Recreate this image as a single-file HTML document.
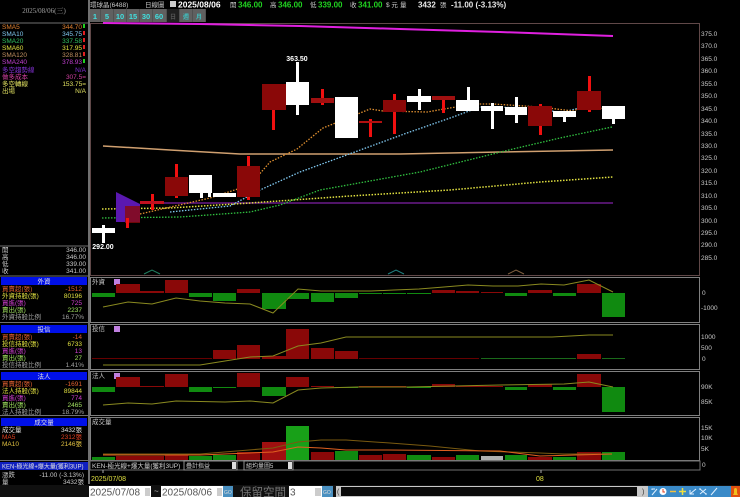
<!DOCTYPE html>
<html><head><meta charset="utf-8"><style>
html,body{margin:0;padding:0;background:#000;width:740px;height:497px;overflow:hidden}
svg{display:block}
text{font-family:"Liberation Sans","Noto Sans CJK TC",sans-serif}
.s{font-size:6.5px}
.m{font-family:"Liberation Serif","Noto Serif CJK SC",serif;font-size:7px}
</style></head><body>
<svg width="740" height="497" viewBox="0 0 740 497" xmlns="http://www.w3.org/2000/svg">
<rect width="740" height="497" fill="#000"/>
<!-- top -->
<text x="90" y="7" class="s" fill="#c8c8c8">環球晶(6488)</text>
<text x="145" y="7" class="s" fill="#c8c8c8">日線圖</text>
<rect x="170" y="1" width="6" height="6" fill="#ccc"/>
<text x="178" y="7.5" font-size="8.5" font-weight="bold" fill="#fff">2025/08/06</text>
<text x="230" y="7" class="s" fill="#c8c8c8">開</text><text x="238" y="7.5" font-size="8" font-weight="bold" fill="#20d020">346.00</text>
<text x="270" y="7" class="s" fill="#c8c8c8">高</text><text x="278" y="7.5" font-size="8" font-weight="bold" fill="#20d020">346.00</text>
<text x="310" y="7" class="s" fill="#c8c8c8">低</text><text x="318" y="7.5" font-size="8" font-weight="bold" fill="#20d020">339.00</text>
<text x="350" y="7" class="s" fill="#c8c8c8">收</text><text x="358" y="7.5" font-size="8" font-weight="bold" fill="#20d020">341.00</text>
<text x="386" y="7" class="s" fill="#c8c8c8">$ 元</text><text x="400" y="7" class="s" fill="#c8c8c8">量</text>
<text x="418" y="7.5" font-size="8" font-weight="bold" fill="#e8e8e8">3432</text><text x="440" y="7" class="s" fill="#c8c8c8">張</text>
<text x="451" y="7.5" font-size="8" font-weight="bold" fill="#e8e8e8">-11.00 (-3.13%)</text>
<!-- buttons -->
<g font-size="7.5" font-weight="bold" fill="#40e0e0" text-anchor="middle">
<rect x="90" y="9" width="116" height="13" fill="#505050"/>
<rect x="90" y="9" width="10" height="13" fill="#606060"/><text x="95" y="19">1</text>
<rect x="101" y="9" width="12" height="13" fill="#606060"/><text x="107" y="19">5</text>
<rect x="114" y="9" width="12" height="13" fill="#606060"/><text x="120" y="19">10</text>
<rect x="127" y="9" width="12" height="13" fill="#606060"/><text x="133" y="19">15</text>
<rect x="140" y="9" width="12" height="13" fill="#606060"/><text x="146" y="19">30</text>
<rect x="153" y="9" width="13" height="13" fill="#606060"/><text x="159" y="19">60</text>
<rect x="167" y="9" width="12" height="13" fill="#202020"/><text x="173" y="19" font-size="6" fill="#555">日</text>
<rect x="180" y="9" width="12" height="13" fill="#606060"/><text x="186" y="19" font-size="6" fill="#40c0c0">週</text>
<rect x="193" y="9" width="12" height="13" fill="#606060"/><text x="199" y="19" font-size="6" fill="#40c0c0">月</text>
</g>
<!-- left panel -->
<rect x="88" y="0" width="2" height="484" fill="#707070"/>
<text x="44" y="13" class="m" fill="#a0a0a0" text-anchor="middle">2025/08/06(三)</text>
<line x1="0" y1="23" x2="88" y2="23" stroke="#707070"/>
<g class="s">
<text x="2" y="29" fill="#e08030">SMA5</text><text x="82" y="29" fill="#e08030" text-anchor="end">344.70</text><rect x="83" y="24" width="2" height="4" fill="#20d020"/>
<text x="2" y="36" fill="#80c8f0">SMA10</text><text x="82" y="36" fill="#80c8f0" text-anchor="end">345.75</text><rect x="83" y="31" width="2" height="4" fill="#e02020"/>
<text x="2" y="43" fill="#30c060">SMA20</text><text x="82" y="43" fill="#30c060" text-anchor="end">337.58</text><rect x="83" y="38" width="2" height="4" fill="#e02020"/>
<text x="2" y="50" fill="#e0e040">SMA60</text><text x="82" y="50" fill="#e0e040" text-anchor="end">317.95</text><rect x="83" y="45" width="2" height="4" fill="#e02020"/>
<text x="2" y="57" fill="#c09060">SMA120</text><text x="82" y="57" fill="#c09060" text-anchor="end">328.81</text><rect x="83" y="52" width="2" height="4" fill="#e02020"/>
<text x="2" y="64" fill="#c040d0">SMA240</text><text x="82" y="64" fill="#c040d0" text-anchor="end">378.93</text><rect x="83" y="59" width="2" height="4" fill="#20d020"/>
<text x="2" y="72" fill="#8030d0">多空趨勢線</text><text x="86" y="72" fill="#8030d0" text-anchor="end">N/A</text>
<text x="2" y="79" fill="#d040a0">做多成本</text><text x="86" y="79" fill="#d040a0" text-anchor="end">307.5=</text>
<text x="2" y="86" fill="#e0e060">多空轉線</text><text x="86" y="86" fill="#e0e060" text-anchor="end">153.75=</text>
<text x="2" y="93" fill="#e0e060">出場</text><text x="86" y="93" fill="#e0e060" text-anchor="end">N/A</text>
</g>
<line x1="0" y1="246" x2="88" y2="246" stroke="#707070"/>
<g class="s" fill="#c8c8c8">
<text x="2" y="252">開</text><text x="86" y="252" text-anchor="end">346.00</text>
<text x="2" y="259">高</text><text x="86" y="259" text-anchor="end">346.00</text>
<text x="2" y="266">低</text><text x="86" y="266" text-anchor="end">339.00</text>
<text x="2" y="273">收</text><text x="86" y="273" text-anchor="end">341.00</text>
</g>
<line x1="0" y1="276" x2="88" y2="276" stroke="#707070"/>
<!-- sections -->
<g class="s">
<rect x="1" y="277" width="86" height="8" fill="#0010e8"/><text x="44" y="283.5" fill="#e0e0e0" text-anchor="middle">外資</text>
<text x="2" y="291" fill="#e06030">買賣超(張)</text><text x="82" y="291" fill="#e06030" text-anchor="end">-1512</text>
<text x="2" y="298" fill="#e0e040">外資持股(張)</text><text x="82" y="298" fill="#e0e040" text-anchor="end">80196</text>
<text x="2" y="305" fill="#d040d0">買進(張)</text><text x="82" y="305" fill="#d040d0" text-anchor="end">725</text>
<text x="2" y="312" fill="#a0e060">賣出(張)</text><text x="82" y="312" fill="#a0e060" text-anchor="end">2237</text>
<text x="2" y="319" fill="#a0a0a0">外資持股比例</text><text x="84" y="319" fill="#a0a0a0" text-anchor="end">16.77%</text>
<line x1="0" y1="322.5" x2="88" y2="322.5" stroke="#707070"/>
<rect x="1" y="325" width="86" height="8" fill="#0010e8"/><text x="44" y="331.5" fill="#e0e0e0" text-anchor="middle">投信</text>
<text x="2" y="339" fill="#e06030">買賣超(張)</text><text x="82" y="339" fill="#e06030" text-anchor="end">-14</text>
<text x="2" y="346" fill="#e0e040">投信持股(張)</text><text x="82" y="346" fill="#e0e040" text-anchor="end">6733</text>
<text x="2" y="353" fill="#d040d0">買進(張)</text><text x="82" y="353" fill="#d040d0" text-anchor="end">13</text>
<text x="2" y="360" fill="#a0e060">賣出(張)</text><text x="82" y="360" fill="#a0e060" text-anchor="end">27</text>
<text x="2" y="367" fill="#a0a0a0">投信持股比例</text><text x="84" y="367" fill="#a0a0a0" text-anchor="end">1.41%</text>
<line x1="0" y1="369.5" x2="88" y2="369.5" stroke="#707070"/>
<rect x="1" y="372" width="86" height="8" fill="#0010e8"/><text x="44" y="378.5" fill="#e0e0e0" text-anchor="middle">法人</text>
<text x="2" y="386" fill="#e06030">買賣超(張)</text><text x="82" y="386" fill="#e06030" text-anchor="end">-1691</text>
<text x="2" y="393" fill="#e0e040">法人持股(張)</text><text x="82" y="393" fill="#e0e040" text-anchor="end">89844</text>
<text x="2" y="400" fill="#d040d0">買進(張)</text><text x="82" y="400" fill="#d040d0" text-anchor="end">774</text>
<text x="2" y="407" fill="#a0e060">賣出(張)</text><text x="82" y="407" fill="#a0e060" text-anchor="end">2465</text>
<text x="2" y="414" fill="#a0a0a0">法人持股比例</text><text x="84" y="414" fill="#a0a0a0" text-anchor="end">18.79%</text>
<line x1="0" y1="415.5" x2="88" y2="415.5" stroke="#707070"/>
<rect x="1" y="418" width="86" height="8" fill="#0010e8"/><text x="44" y="424.5" fill="#e0e0e0" text-anchor="middle">成交量</text>
<text x="2" y="432" fill="#e0e0e0">成交量</text><text x="82" y="432" fill="#e0e0e0" text-anchor="end">3432張</text>
<text x="2" y="439" fill="#e04020">MA5</text><text x="82" y="439" fill="#e04020" text-anchor="end">2312張</text>
<text x="2" y="446" fill="#e0c040">MA10</text><text x="82" y="446" fill="#e0c040" text-anchor="end">2146張</text>
<line x1="0" y1="460.5" x2="88" y2="460.5" stroke="#707070"/>
<rect x="0" y="462" width="88" height="8" fill="#1020c0"/><text x="2" y="468.5" fill="#e0e0e0" font-size="6">KEN-極光線+爆大量(獲利3UP)</text>
<text x="2" y="477" fill="#c8c8c8">漲跌</text><text x="84" y="477" fill="#c8c8c8" text-anchor="end">-11.00 (-3.13%)</text>
<text x="2" y="484" fill="#c8c8c8">量</text><text x="84" y="484" fill="#c8c8c8" text-anchor="end">3432張</text>
</g>
<!-- main chart frame -->
<rect x="90.5" y="23.5" width="609" height="252" fill="none" stroke="#604848"/>
<polyline points="103,23 200,24 300,26 400,29 500,32 613,36" fill="none" stroke="#e020e0" stroke-width="2"/>
<g class="s" fill="#c8c8c8" font-size="7">
<text x="701" y="36">375.0</text><text x="701" y="48">370.0</text><text x="701" y="61">365.0</text><text x="701" y="73">360.0</text><text x="701" y="86">355.0</text><text x="701" y="98">350.0</text><text x="701" y="111">345.0</text><text x="701" y="123">340.0</text><text x="701" y="136">335.0</text><text x="701" y="148">330.0</text><text x="701" y="160">325.0</text><text x="701" y="173">320.0</text><text x="701" y="185">315.0</text><text x="701" y="198">310.0</text><text x="701" y="210">305.0</text><text x="701" y="223">300.0</text><text x="701" y="235">295.0</text><text x="701" y="247">290.0</text><text x="701" y="260">285.0</text>
</g>
<polyline points="103,146 170,150 240,154 400,154 500,152 613,150" fill="none" stroke="#d0a070" stroke-width="1.5"/>
<line x1="140" y1="203" x2="613" y2="203" stroke="#6a1a8a" stroke-width="1.5"/>
<polyline points="102,209 170,208 250,203 350,196 450,190 540,182 613,177" fill="none" stroke="#e0e040" stroke-width="1.5" stroke-dasharray="1.5,1.5"/>
<polyline points="102,218 180,217 250,212 280,205 320,190 420,172 513,149 560,138 612,127" fill="none" stroke="#30c040" stroke-width="1.3" stroke-dasharray="1.5,1.5"/>
<polyline points="170,212 230,206 260,190 300,172 363,149 407,133 453,117 480,107 540,108 560,113 583,107 612,107" fill="none" stroke="#80c8f0" stroke-width="1.3" stroke-dasharray="1.5,1.5"/>
<polyline points="140,214 210,198 250,185 270,162 297,149 323,128 370,109 383,111 427,112 473,104 493,104 540,107 573,111 583,107 612,109" fill="none" stroke="#e09030" stroke-width="1.3" stroke-dasharray="1.5,1.5"/>
<polygon points="116,192 140,204 140,222 116,222" fill="#5a18b0"/>
<rect x="125" y="206" width="15" height="17" fill="#8a0a0a" opacity=".8"/>
<!-- candles -->
<g fill="#fff">
<rect x="102" y="225" width="3" height="18"/><rect x="92" y="228" width="23" height="5"/>
<rect x="208" y="181" width="3" height="16"/><rect x="213" y="193" width="23" height="4"/>
<rect x="296" y="62" width="3" height="53"/><rect x="286" y="82" width="23" height="23"/>
<rect x="335" y="97" width="23" height="41"/>
<rect x="418" y="89" width="3" height="21"/><rect x="407" y="96" width="24" height="6"/>
<rect x="467" y="87" width="3" height="24"/><rect x="456" y="100" width="23" height="11"/>
<rect x="491" y="103" width="3" height="26"/><rect x="481" y="106" width="22" height="5"/>
<rect x="515" y="97" width="3" height="26"/><rect x="505" y="107" width="22" height="8"/>
<rect x="563" y="111" width="3" height="11"/><rect x="553" y="111" width="23" height="6"/>
<rect x="612" y="106" width="3" height="18"/><rect x="602" y="106" width="23" height="13"/>
<rect x="200" y="175" width="3" height="23"/><rect x="189" y="175" width="23" height="18"/>
</g>
<text x="297" y="61" font-size="7" font-weight="bold" fill="#fff" text-anchor="middle">363.50</text>
<text x="103" y="249" font-size="7" font-weight="bold" fill="#fff" text-anchor="middle">292.00</text>
<g fill="#f01010">
<rect x="126" y="218" width="3" height="10"/>
<rect x="151" y="194" width="3" height="16"/>
<rect x="175" y="164" width="3" height="34"/>
<rect x="247" y="156" width="3" height="44"/>
<rect x="272" y="110" width="3" height="20"/>
<rect x="321" y="89" width="3" height="16"/>
<rect x="369" y="119" width="3" height="18"/>
<rect x="393" y="94" width="3" height="40"/>
<rect x="442" y="96" width="3" height="17"/>
<rect x="539" y="104" width="3" height="31"/>
<rect x="588" y="76" width="3" height="36"/>
</g>
<g fill="#8a0808">
<rect x="140" y="201" width="24" height="3" fill="#c01020"/>
<rect x="165" y="177" width="23" height="19"/>
<rect x="237" y="166" width="23" height="31"/>
<rect x="262" y="84" width="24" height="26"/>
<rect x="311" y="98" width="23" height="5" fill="#a01010"/>
<rect x="359" y="121" width="23" height="2" fill="#b01010"/>
<rect x="383" y="100" width="23" height="12"/>
<rect x="432" y="96" width="23" height="4" fill="#a01010"/>
<rect x="528" y="106" width="24" height="20"/>
<rect x="577" y="91" width="24" height="19"/>
</g>
<polyline points="144,274 152,270 160,274" fill="none" stroke="#208060"/>
<polyline points="388,274 396,270 404,274" fill="none" stroke="#208080"/>
<polyline points="508,274 516,270 524,274" fill="none" stroke="#806040"/>
<!-- subpanels frames -->
<g fill="none" stroke="#808080">
<rect x="90.5" y="277.5" width="609" height="45"/>
<rect x="90.5" y="324.5" width="609" height="45"/>
<rect x="90.5" y="371.5" width="609" height="44"/>
<rect x="90.5" y="417.5" width="609" height="43"/>
</g>
<g class="s" fill="#c8c8c8" font-size="7">
<text x="702" y="295">0</text><text x="701" y="310">-1000</text>
<text x="701" y="339">1000</text><text x="701" y="350">500</text><text x="702" y="361">0</text>
<text x="701" y="389">90K</text><text x="701" y="404">85K</text>
<text x="701" y="430">15K</text><text x="701" y="440">10K</text><text x="701" y="451">5K</text><text x="702" y="467">0</text>
</g>
<g class="s" fill="#c8c8c8">
<text x="92" y="284">外資</text><text x="92" y="331">投信</text><text x="92" y="378">法人</text><text x="92" y="424">成交量</text>
</g>
<rect x="114" y="279" width="6" height="6" fill="#c080e0"/>
<rect x="114" y="326" width="6" height="6" fill="#c080e0"/>
<rect x="114" y="373" width="6" height="6" fill="#c080e0"/>
<!-- 外資 bars -->
<g fill="#108a10">
<rect x="92" y="293" width="23" height="4"/><rect x="189" y="293" width="23" height="4"/><rect x="213" y="293" width="23" height="8"/>
<rect x="262" y="293" width="24" height="16"/><rect x="286" y="293" width="23" height="6"/><rect x="311" y="293" width="23" height="9"/><rect x="335" y="293" width="23" height="5"/>
<rect x="359" y="293" width="23" height="1"/><rect x="383" y="293" width="23" height="1"/><rect x="407" y="293" width="24" height="1"/>
<rect x="505" y="293" width="22" height="3"/><rect x="553" y="293" width="23" height="3"/><rect x="602" y="293" width="23" height="24"/>
</g>
<g fill="#8a0808">
<rect x="116" y="284" width="24" height="9"/><rect x="140" y="291" width="24" height="2"/><rect x="165" y="280" width="23" height="13"/><rect x="237" y="289" width="23" height="4"/>
<rect x="432" y="290" width="23" height="3"/><rect x="456" y="291" width="23" height="2"/><rect x="481" y="292" width="22" height="1"/><rect x="528" y="290" width="24" height="3"/><rect x="577" y="284" width="24" height="9"/>
</g>
<polyline points="103,307 128,302 152,304 176,298 200,301 225,303 250,304 273,313 298,289 321,291 346,291 371,291 394,290 419,289 444,287 468,285 493,286 518,286 541,284 564,285 589,280 613,292" fill="none" stroke="#8a8a20"/>
<!-- 投信 -->
<g fill="#8a0808">
<rect x="92" y="358" width="120" height="1" fill="#600"/>
<rect x="213" y="350" width="23" height="9"/><rect x="237" y="345" width="23" height="14"/><rect x="262" y="356" width="24" height="3"/>
<rect x="286" y="329" width="23" height="30"/><rect x="311" y="348" width="23" height="11"/><rect x="335" y="351" width="23" height="8"/>
<rect x="359" y="358" width="120" height="1" fill="#600"/><rect x="577" y="354" width="24" height="5"/>
</g>
<rect x="481" y="358" width="95" height="1" fill="#1a6a1a"/><rect x="602" y="358" width="23" height="1" fill="#1a6a1a"/>
<polyline points="103,365 200,365 250,357 273,356 298,346 321,343 346,337 400,337 500,337 552,337 589,335 613,335" fill="none" stroke="#8a8a20"/>
<!-- 法人 -->
<g fill="#108a10">
<rect x="92" y="387" width="23" height="5"/><rect x="189" y="387" width="23" height="5"/><rect x="213" y="387" width="23" height="1"/><rect x="262" y="387" width="24" height="9"/>
<rect x="335" y="387" width="23" height="1"/><rect x="407" y="387" width="24" height="1"/><rect x="505" y="387" width="22" height="3"/><rect x="553" y="387" width="23" height="3"/><rect x="602" y="387" width="23" height="25"/>
</g>
<g fill="#8a0808">
<rect x="116" y="377" width="24" height="10"/><rect x="140" y="386" width="24" height="1"/><rect x="165" y="374" width="23" height="13"/><rect x="237" y="373" width="23" height="14"/>
<rect x="286" y="377" width="23" height="10"/><rect x="311" y="386" width="23" height="1"/><rect x="359" y="386" width="47" height="1"/>
<rect x="432" y="384" width="23" height="3"/><rect x="456" y="386" width="47" height="1"/><rect x="528" y="384" width="24" height="3"/><rect x="577" y="374" width="24" height="13"/>
</g>
<polyline points="103,405 128,403 152,404 176,401 225,402 250,401 273,403 298,390 321,388 358,387 408,387 500,385 564,384 589,382 613,387" fill="none" stroke="#8a8a20"/>
<!-- volume -->
<g fill="#108a10">
<rect x="92" y="457" width="23" height="3"/><rect x="189" y="456" width="23" height="4"/><rect x="213" y="455" width="23" height="5"/>
<rect x="286" y="426" width="23" height="34" fill="#18a018"/><rect x="335" y="451" width="23" height="9"/><rect x="407" y="455" width="24" height="5"/>
<rect x="456" y="455" width="23" height="5"/><rect x="505" y="455" width="22" height="5"/><rect x="553" y="457" width="23" height="3"/><rect x="602" y="452" width="23" height="8"/>
</g>
<g fill="#8a0808">
<rect x="116" y="456" width="24" height="4"/><rect x="140" y="456" width="24" height="4"/><rect x="165" y="454" width="23" height="6"/>
<rect x="237" y="452" width="23" height="8"/><rect x="262" y="442" width="24" height="18" fill="#a01010"/><rect x="311" y="452" width="23" height="8"/>
<rect x="359" y="455" width="23" height="5"/><rect x="383" y="454" width="23" height="6"/><rect x="432" y="457" width="23" height="3"/><rect x="528" y="457" width="24" height="3"/><rect x="577" y="452" width="24" height="8"/>
</g>
<rect x="481" y="456" width="22" height="4" fill="#b0b0b0"/>
<polyline points="103,454 200,454 273,448 298,442 321,440 346,440 390,443 430,446 480,451 540,453 564,454 612,454" fill="none" stroke="#7a5a10"/>
<polyline points="103,455 200,455 273,452 298,447 321,448 346,450 388,450 500,451 540,456 612,454" fill="none" stroke="#e06020"/>
<!-- KEN row -->
<rect x="90" y="461" width="610" height="9" fill="#000" stroke="#707070"/>
<text x="92" y="468" font-size="6" fill="#d0d0d0" class="s">KEN-極光線+爆大量(獲利3UP)</text>
<rect x="184" y="461" width="53" height="9" fill="#000" stroke="#909090"/><text x="186" y="468" font-size="6" fill="#d0d0d0">疊計指益</text><rect x="232" y="462" width="4" height="7" fill="#ddd"/>
<rect x="244" y="461" width="49" height="9" fill="#000" stroke="#909090"/><text x="246" y="468" font-size="6" fill="#d0d0d0">組均量圖5</text><rect x="288" y="462" width="4" height="7" fill="#ddd"/>
<!-- dates -->
<line x1="103" y1="470" x2="103" y2="473" stroke="#aaa"/>
<text x="91" y="481" font-size="7" fill="#e0e040">2025/07/08</text>
<line x1="541" y1="470" x2="541" y2="473" stroke="#aaa"/>
<text x="536" y="481" font-size="7" fill="#e0e040">08</text>
<!-- bottom bar -->
<rect x="0" y="485" width="740" height="12" fill="#101010"/>
<rect x="89" y="486" width="62" height="11" fill="#fff"/><text x="90" y="495.5" font-family="Liberation Serif" font-size="10" fill="#555">2025/07/08</text><rect x="145" y="488" width="5" height="8" fill="#ccc"/>
<text x="154" y="494" font-size="8" fill="#bbb">~</text>
<rect x="161" y="486" width="62" height="11" fill="#fff"/><text x="162" y="495.5" font-family="Liberation Serif" font-size="10" fill="#555">2025/08/06</text><rect x="217" y="488" width="5" height="8" fill="#ccc"/>
<rect x="223" y="486" width="10" height="11" fill="#4a90c0"/><text x="224" y="494" font-size="5" fill="#ddd">GO</text>
<text x="240" y="496" font-family="Liberation Serif,'Noto Serif CJK SC',serif" font-size="11.5" fill="#777">保留空間</text>
<rect x="289" y="486" width="33" height="11" fill="#fff"/><text x="290" y="495.5" font-family="Liberation Serif" font-size="10" fill="#555">3</text><rect x="315" y="488" width="6" height="8" fill="#ccc"/>
<rect x="322" y="486" width="11" height="11" fill="#4a90c0"/><text x="323" y="494" font-size="5" fill="#ddd">GO</text>
<rect x="336" y="486" width="312" height="11" fill="#c8c8c8"/><rect x="341" y="487" width="296" height="9" fill="#0a0a0a"/>
<text x="337" y="494" font-size="7" fill="#333">(</text><text x="642" y="494" font-size="7" fill="#333">)</text>
<rect x="648" y="486" width="83" height="11" fill="#3a8ac8"/>
<g stroke="#e0f0ff" stroke-width="1" fill="none">
<path d="M652 495 L657 489 M652 490 L652 489 L655 489"/>
<circle cx="663" cy="491.5" r="3.5" fill="#fff" stroke="none"/><path d="M663 489v3h2" stroke="#e04020"/>
<path d="M670 491.5h6" stroke="#f0c040" stroke-width="1.5"/>
<path d="M679 491.5h7 M682.5 488v7" stroke="#f0e040" stroke-width="1.5"/>
<path d="M690 494 L696 489 M690 490 v4 h4"/>
<path d="M700 489 l6 5 M706 489 l-6 5 M699 489h2 M705 494h2"/>
<path d="M711 495 L717 488"/>
</g>
<rect x="731" y="486" width="9" height="11" fill="#e05010"/><path d="M733 495h5l-1-2v-3a1.5 2 0 0 0-3 0v3z" fill="#f0c020"/>
</svg>
</body></html>
